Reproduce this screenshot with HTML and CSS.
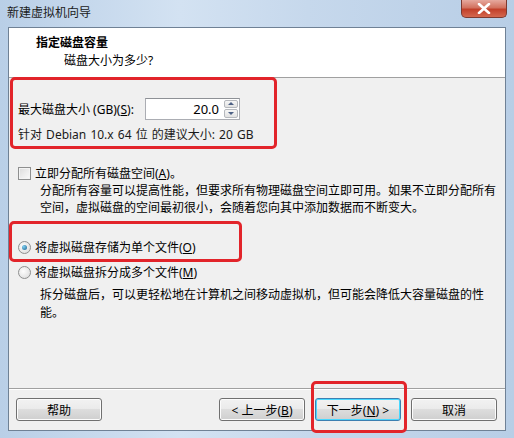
FILE: index.html
```html
<!DOCTYPE html>
<html lang="zh-CN">
<head>
    <meta charset="UTF-8">
    <title>新建虚拟机向导</title>
    <link rel="stylesheet" href="styles.css">
</head>
<body>
    <div class="window">
        <div class="titlebar">
            <span class="title">新建虚拟机向导</span>
            <div class="close-btn">
                <svg width="14" height="11" viewBox="0 0 14 11">
                    <path d="M2 1 L12 10 M12 1 L2 10" stroke="#fff" stroke-width="2.6" stroke-linecap="round"/>
                </svg>
            </div>
        </div>

        <div class="client">
            <div class="header">
                <div class="header-title">指定磁盘容量</div>
                <div class="header-sub">磁盘大小为多少?</div>
            </div>

            <div class="content">
                <div class="size-row">
                    <span class="size-label">最大磁盘大小 (GB)(<u>S</u>):</span>
                    <div class="spinbox">
                        <div class="spin-value">20.0</div>
                        <div class="spin-buttons">
                            <div class="spin-btn"><span class="arrow-up"></span></div>
                            <div class="spin-btn"><span class="arrow-down"></span></div>
                        </div>
                    </div>
                </div>
                <div class="hint">针对 Debian 10.x 64 位 的建议大小: 20 GB</div>

                <label class="option check-row">
                    <span class="checkbox"></span>
                    <span>立即分配所有磁盘空间(<u>A</u>)。</span>
                </label>
                <div class="desc">分配所有容量可以提高性能，但要求所有物理磁盘空间立即可用。如果不立即分配所有空间，虚拟磁盘的空间最初很小，会随着您向其中添加数据而不断变大。</div>

                <label class="option radio-first">
                    <span class="radio checked"></span>
                    <span>将虚拟磁盘存储为单个文件(<u>O</u>)</span>
                </label>
                <label class="option radio-second">
                    <span class="radio"></span>
                    <span>将虚拟磁盘拆分成多个文件(<u>M</u>)</span>
                </label>
                <div class="desc desc-split">拆分磁盘后，可以更轻松地在计算机之间移动虚拟机，但可能会降低大容量磁盘的性能。</div>
            </div>

            <div class="separator"></div>

            <div class="buttons">
                <button class="btn">帮助</button>
                <div class="spacer"></div>
                <button class="btn">&lt; 上一步(<u>B</u>)</button>
                <button class="btn btn-default">下一步(<u>N</u>) &gt;</button>
                <button class="btn">取消</button>
            </div>
        </div>

        <!-- marcações vermelhas por cima da janela -->
        <div class="mark mark-size"></div>
        <div class="mark mark-single"></div>
        <div class="mark mark-next"></div>
    </div>
</body>
</html>
```

FILE: styles.css
```css
* {
    margin: 0;
    padding: 0;
    box-sizing: border-box;
}

body {
    width: 514px;
    height: 438px;
    overflow: hidden;
    font-family: "Noto Sans", "Noto Sans CJK SC", sans-serif;
    font-size: 12px;
    color: #000;
    background: #fff;
}

.window {
    position: relative;
    width: 514px;
    height: 438px;
    display: flex;
    flex-direction: column;
    padding: 0 8px 7px 8px;
    background: linear-gradient(to right, #b9cfe7, #d3e2f2 35%, #c6d8ec 60%, #b8cee6);
}

.titlebar {
    height: 27px;
    display: flex;
    align-items: flex-start;
}

.title {
    margin-left: -1px;
    margin-top: 4px;
    line-height: 18px;
    color: #1b1b1b;
}

.close-btn {
    margin-left: auto;
    margin-right: -1px;
    width: 46px;
    height: 18px;
    display: flex;
    align-items: center;
    justify-content: center;
    border: 1px solid #7d3a30;
    border-top: none;
    border-radius: 0 0 5px 5px;
    background: linear-gradient(#e6a99e, #d2725f 45%, #c2402a 55%, #d4684f);
}

.client {
    flex: 1;
    display: flex;
    flex-direction: column;
    border: 1px solid #6f8195;
    background: #f0f0f0;
}

.header {
    height: 50px;
    background: #fff;
    border-bottom: 1px solid #a0a0a0;
    padding: 6px 0 0 27px;
}

.header-title {
    font-weight: bold;
    line-height: 18px;
}

.header-sub {
    margin-left: 28px;
    line-height: 18px;
}

.content {
    padding: 0 2px 0 9px;
    flex: 1;
}

.size-row {
    margin-top: 19px;
    height: 23px;
    display: flex;
    align-items: center;
}

.size-label {
    width: 127px;
}

.spinbox {
    width: 95px;
    height: 22px;
    display: flex;
    border: 1px solid #abadb3;
    border-top-color: #8e9196;
    background: #fff;
}

.spin-value {
    flex: 1;
    text-align: right;
    padding-right: 5px;
    line-height: 20px;
    font-size: 13px;
}

.spin-buttons {
    width: 15px;
    display: flex;
    flex-direction: column;
    gap: 1px;
    padding: 1px 1px 1px 0;
}

.spin-btn {
    flex: 1;
    display: flex;
    align-items: center;
    justify-content: center;
    border: 1px solid #b5b8bd;
    border-radius: 2px;
    background: linear-gradient(#f6f6f6, #e2e2e2);
}

.arrow-up, .arrow-down {
    width: 0;
    height: 0;
    border-left: 3px solid transparent;
    border-right: 3px solid transparent;
}

.arrow-up {
    border-bottom: 3px solid #4d6185;
}

.arrow-down {
    border-top: 3px solid #4d6185;
}

.hint {
    margin-top: 6px;
    line-height: 17px;
    color: #1a1a1a;
    word-spacing: 1px;
}

.option {
    display: flex;
    align-items: center;
    gap: 4px;
    height: 16px;
}

.check-row {
    margin-top: 22px;
}

.checkbox {
    width: 13px;
    height: 13px;
    border: 1px solid #8e8f8f;
    background: linear-gradient(135deg, #dcdcdc, #fbfbfb);
    box-shadow: inset 0 0 0 1px #f4f4f4;
}

.desc {
    margin: 1px 0 0 22px;
    line-height: 17px;
}

.radio-first {
    margin-top: 23px;
}

.radio-second {
    margin-top: 9px;
}

.radio {
    width: 13px;
    height: 13px;
    border-radius: 50%;
    border: 1px solid #8e8f8f;
    background: radial-gradient(circle at 40% 40%, #fdfdfd, #d8d8d8);
    display: flex;
    align-items: center;
    justify-content: center;
}

.radio.checked::after {
    content: "";
    width: 5px;
    height: 5px;
    border-radius: 50%;
    background: radial-gradient(circle at 35% 35%, #7fd0f2, #1a5f8c);
}

.desc-split {
    margin-top: 6px;
    margin-right: 12px;
    line-height: 18px;
}

.separator {
    height: 2px;
    border-top: 1px solid #a0a0a0;
    border-bottom: 1px solid #fff;
}

.buttons {
    display: flex;
    gap: 10px;
    padding: 8px 8px 9px 7px;
}

.spacer {
    flex: 1;
}

.btn {
    width: 86px;
    height: 23px;
    font-family: inherit;
    font-size: 12px;
    color: #000;
    border: 1px solid #707070;
    border-radius: 3px;
    background: linear-gradient(#f2f2f2 0%, #ebebeb 45%, #dddddd 50%, #cfcfcf 100%);
    box-shadow: inset 0 0 0 1px #fcfcfc;
}

.btn-default {
    border-color: #3c7fb1;
    box-shadow: inset 0 0 0 1px #48d8ff;
}

.mark {
    position: absolute;
    border: 3px solid #e2242a;
    border-radius: 5px;
}

.mark-size {
    left: 10px;
    top: 77px;
    width: 267px;
    height: 72px;
}

.mark-single {
    left: 9px;
    top: 221px;
    width: 233px;
    height: 41px;
}

.mark-next {
    left: 311px;
    top: 381px;
    width: 96px;
    height: 52px;
}
```
